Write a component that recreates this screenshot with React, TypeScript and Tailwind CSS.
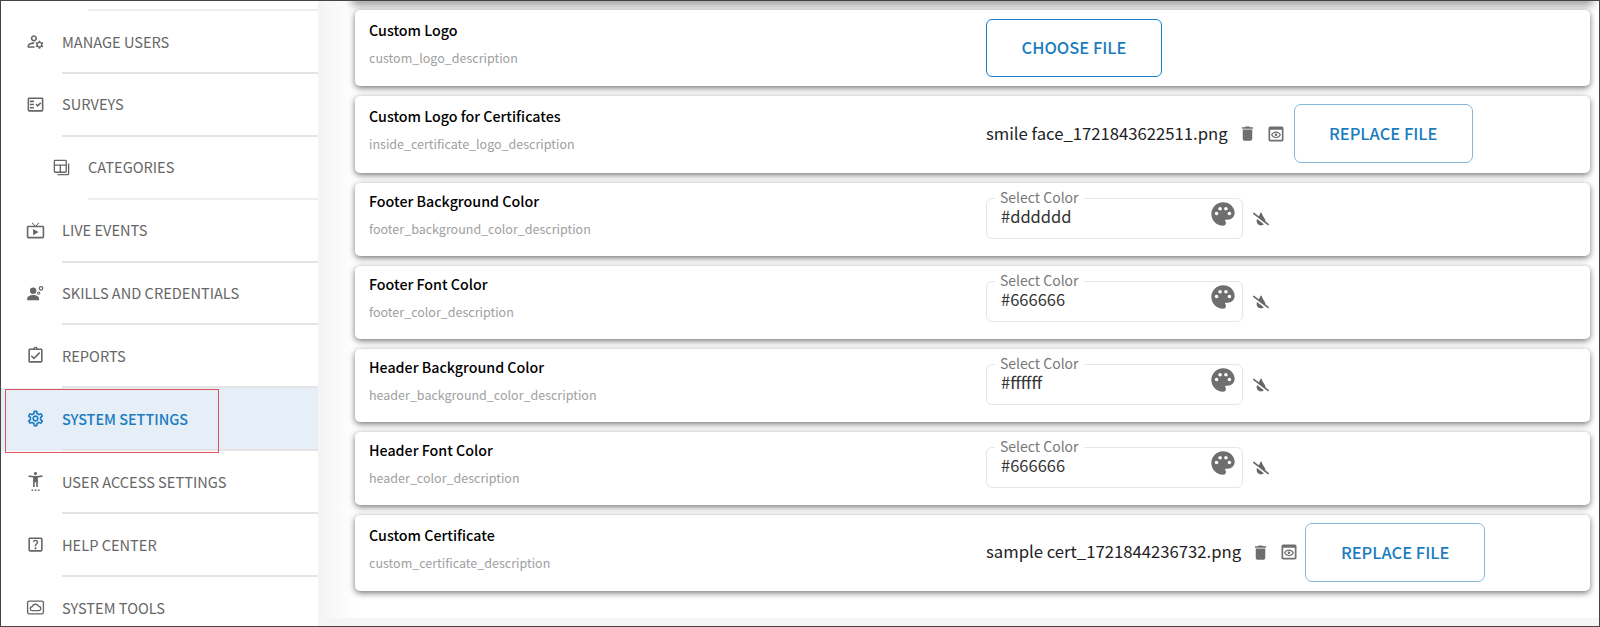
import { ReactNode } from "react";
import { FaTintSlash } from "react-icons/fa";
import {
  MdDelete,
  MdOutlineAssignmentTurnedIn,
  MdOutlineFactCheck,
  MdOutlineHelpCenter,
  MdOutlineLiveTv,
  MdOutlineManageAccounts,
  MdOutlinePreview,
  MdOutlineSettings,
  MdPalette,
  MdSettingsAccessibility,
} from "react-icons/md";

function CategoriesIcon({ className }: { className?: string }) {
  return (
    <svg viewBox="0 0 24 24" fill="none" stroke="currentColor" strokeWidth="1.7" className={className}>
      <rect x="3" y="3" width="15" height="15" rx="1" />
      <path d="M3 9h15M10.5 9v9M21 7v13a1 1 0 0 1-1 1H7" />
    </svg>
  );
}

function SkillsIcon({ className }: { className?: string }) {
  return (
    <svg viewBox="0 0 24 24" fill="currentColor" className={className}>
      <circle cx="9" cy="8.5" r="4" />
      <path d="M1.5 20.5v-2C1.500 15.500 5.500 14 9 14s7.500 1.500 7.500 4.500v2z" />
      <circle cx="19" cy="5.500" r="2.200" fill="none" stroke="currentColor" strokeWidth="1.600" />
      <circle cx="16" cy="11.500" r="1.500" fill="none" stroke="currentColor" strokeWidth="1.300" />
    </svg>
  );
}

function ToolsIcon({ className }: { className?: string }) {
  return (
    <svg viewBox="0 0 24 24" fill="none" stroke="currentColor" strokeWidth="1.7" className={className}>
      <rect x="2" y="4" width="20" height="16" rx="2" />
      <path d="M8 16a2.500 2.500 0 0 1-.3-5 4.500 4.500 0 0 1 8.400-.4A2.700 2.700 0 0 1 16 16z" />
    </svg>
  );
}

const navItems = [
  { title: "MANAGE USERS", icon: MdOutlineManageAccounts },
  { title: "SURVEYS", icon: MdOutlineFactCheck },
  { title: "CATEGORIES", icon: CategoriesIcon, sub: true },
  { title: "LIVE EVENTS", icon: MdOutlineLiveTv },
  { title: "SKILLS AND CREDENTIALS", icon: SkillsIcon },
  { title: "REPORTS", icon: MdOutlineAssignmentTurnedIn },
  { title: "SYSTEM SETTINGS", icon: MdOutlineSettings, active: true },
  { title: "USER ACCESS SETTINGS", icon: MdSettingsAccessibility },
  { title: "HELP CENTER", icon: MdOutlineHelpCenter },
  { title: "SYSTEM TOOLS", icon: ToolsIcon },
];

function Card({ title, desc, className, tight, children }: { title: string; desc: string; className: string; tight?: boolean; children: ReactNode }) {
  return (
    <div className={`flex items-start rounded-[5px] bg-white pl-[14px] shadow-[0_2px_6px_rgba(0,0,0,0.55)] ${className}`}>
      <div className={`w-[617px] shrink-0 ${tight ? "pt-[7px]" : "pt-[9px]"}`}>
        <div className="text-[14.25px] leading-[22px] font-medium text-black">{title}</div>
        <div className="mt-[7px] text-[12.5px] leading-[20px] text-[#a0a0a0]">{desc}</div>
      </div>
      {children}
    </div>
  );
}

function FileRow({ name, buttonClass }: { name: string; buttonClass: string }) {
  return (
    <div className="mt-[8px] flex items-center">
      <span className="text-[16.7px] text-[#222]">{name}</span>
      <MdDelete className="ml-[10px] h-[19px] w-[19px] text-[#6f6f6f]" />
      <MdOutlinePreview className="ml-[9px] h-[20px] w-[20px] text-[#6f6f6f]" />
      <button className={`h-[59px] rounded-[7px] border border-[#86b6da] text-[16.5px] font-medium text-[#1a7cc0] ${buttonClass}`}>
        REPLACE FILE
      </button>
    </div>
  );
}

function ColorField({ value }: { value: string }) {
  return (
    <div className="mt-[15px] flex items-start">
      <div className="relative flex h-[41px] w-[257px] items-start justify-between rounded-[6px] border border-[#e6e6e6] pl-[14px] pr-[5px]">
        <span className="absolute -top-[10px] left-[8px] bg-white px-[5px] text-[14px] leading-[16px] text-[#777]">Select Color</span>
        <span className="mt-[8px] text-[16.5px] leading-[18px] text-[#333]">{value}</span>
        <MdPalette className="mt-[1px] h-[28px] w-[28px] text-[#6e6e6e]" />
      </div>
      <FaTintSlash className="ml-[10px] mt-[14px] h-[14px] w-[16px] text-[#666]" />
    </div>
  );
}

const colorCards = [
  { title: "Footer Background Color", desc: "footer_background_color_description", value: "#dddddd" },
  { title: "Footer Font Color", desc: "footer_color_description", value: "#666666" },
  { title: "Header Background Color", desc: "header_background_color_description", value: "#ffffff" },
  { title: "Header Font Color", desc: "header_color_description", value: "#666666" },
];

export default function App() {
  return (
    <div className="flex h-[627px] w-[1600px] overflow-hidden border border-[#444] font-['Noto_Sans_CJK_JP','Noto_Sans',sans-serif]">
      <aside className="w-[317px] shrink-0 bg-white">
        <div className="ml-[87px] mt-[8px] h-[2px] bg-[#eeeeee]" />
        {navItems.map((item) => (
          <div key={item.title} className={`relative flex h-[62.9px] flex-col ${item.active ? "bg-[#e6eef7]" : ""}`}>
            <div
              className={`flex flex-1 items-center gap-[11px] ${item.sub ? "pl-[51px]" : "pl-[25px]"} ${
                item.active ? "text-[#1a7cc0]" : "text-[#666]"
              }`}
            >
              <item.icon className="h-[19px] w-[19px] shrink-0" />
              <span className={`pl-[6px] ${item.active ? "text-[14.4px] font-medium" : "text-[14.6px]"}`}>{item.title}</span>
            </div>
            <div className={`h-[2px] ${item.sub ? "ml-[87px] bg-[#eeeeee]" : "ml-[61px] bg-[#e4e4e4]"}`} />
            {item.active && <div className="absolute left-[4px] top-[1px] h-[64px] w-[214px] border border-[#e0555c]" />}
          </div>
        ))}
      </aside>
      <main className="flex flex-1 flex-col justify-between bg-linear-to-r from-[#f4f4f4] from-0% to-white to-[3%]">
        <div className="ml-[37px] mr-[9px] flex flex-col gap-[10px]">
          <div className="-mb-[1.5px] h-0 shadow-[0_0_8px_3px_rgba(0,0,0,0.6)]" />
          <Card title="Custom Logo" desc="custom_logo_description" className="h-[76.5px]">
            <button className="mt-[9px] h-[58px] w-[176px] rounded-[6px] border border-[#1a80c4] text-[16.5px] font-medium text-[#1a7cc0]">
              CHOOSE FILE
            </button>
          </Card>
          <Card title="Custom Logo for Certificates" desc="inside_certificate_logo_description" className="h-[76.5px]">
            <FileRow name="smile face_1721843622511.png" buttonClass="ml-[8px] w-[179px]" />
          </Card>
          {colorCards.map((c) => (
            <Card key={c.title} title={c.title} desc={c.desc} tight className="h-[73px]">
              <ColorField value={c.value} />
            </Card>
          ))}
          <Card title="Custom Certificate" desc="custom_certificate_description" className="h-[76.5px]">
            <FileRow name="sample cert_1721844236732.png" buttonClass="ml-[6px] w-[180px]" />
          </Card>
        </div>
        <div className="h-[8px] bg-[#f5f5f5]" />
      </main>
    </div>
  );
}
